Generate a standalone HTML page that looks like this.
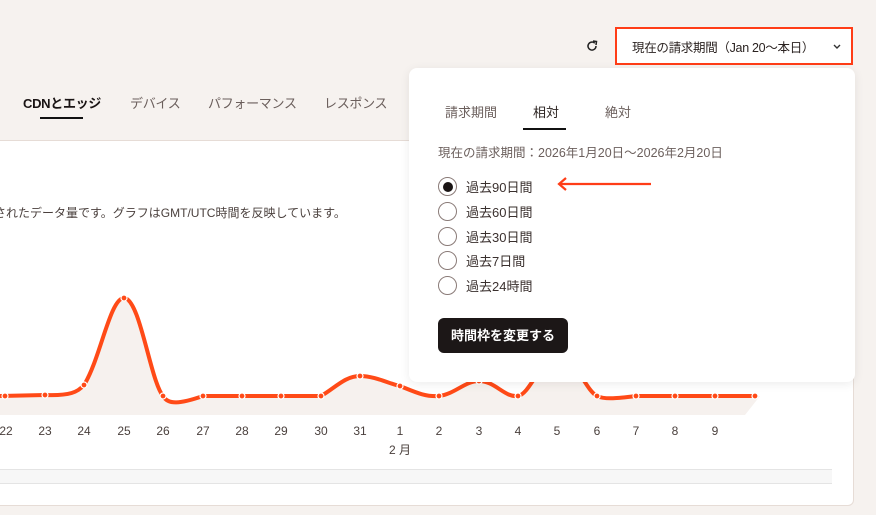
<!DOCTYPE html>
<html><head><meta charset="utf-8"><style>
*{margin:0;padding:0;box-sizing:border-box}
body{width:876px;height:515px;overflow:hidden;background:#f6f2ef;font-family:"Liberation Sans","Noto Sans CJK JP",sans-serif;position:relative;color:#222}
.abs{position:absolute;white-space:nowrap}
.tab{font-size:13px;color:#6b5f5c;top:93px;letter-spacing:-0.3px}
.card{position:absolute;left:-10px;top:140px;width:864px;height:366px;background:#fff;border:1px solid #e6dcd6;border-radius:6px}
.pop{position:absolute;left:409px;top:68px;width:446px;height:314px;background:#fff;border-radius:8px;box-shadow:0 2px 10px rgba(0,0,0,0.08)}
.radio{position:absolute;left:438px;width:19px;height:19px;border:1.3px solid #8a7b78;border-radius:50%}
.rl{font-size:13px;color:#3a302e;left:466px}
.xl{font-size:12px;color:#4a403d;top:424px;transform:translateX(-50%)}
</style></head><body>
<div class="abs tab" style="left:23px;color:#1a1414;font-weight:bold">CDNとエッジ</div>
<div class="abs" style="left:40px;top:117px;width:43px;height:2px;background:#111"></div>
<div class="abs tab" style="left:130px">デバイス</div>
<div class="abs tab" style="left:208px">パフォーマンス</div>
<div class="abs tab" style="left:324px">レスポンス</div>
<div class="card"></div>
<div class="abs" style="left:-6px;top:204px;font-size:12px;color:#4a403d">されたデータ量です。グラフはGMT/UTC時間を反映しています。</div>
<svg class="abs" style="left:0;top:0" width="876" height="515">
<path d="M0,396 L45,395 C70,396 78,392 84,385 C100,360 110,298 124,298 C140,298 150,380 163,396 C168,405 180,404 203,396 L321,396 C335,388 345,376 360,376 C375,376 390,384 400,386 C415,392 425,397 439,396 C455,394 465,381 479,381 C495,381 505,398 518,396 C530,394 540,360 557,355 C575,355 585,390 597,396 C605,400 620,398 636,396 L760,396 L745,415 L0,415Z" fill="#f6f1ee"/>
<path d="M0,396 L45,395 C70,396 78,392 84,385 C100,360 110,298 124,298 C140,298 150,380 163,396 C168,405 180,404 203,396 L321,396 C335,388 345,376 360,376 C375,376 390,384 400,386 C415,392 425,397 439,396 C455,394 465,381 479,381 C495,381 505,398 518,396 C530,394 540,360 557,355 C575,355 585,390 597,396 C605,400 620,398 636,396 L755,396" fill="none" stroke="#ff4a17" stroke-width="4"/>
<g fill="#ff4a17" stroke="#fff" stroke-width="1.2">
<circle cx="5" cy="396" r="3"/><circle cx="45" cy="395" r="3"/><circle cx="84" cy="385" r="3"/><circle cx="124" cy="298" r="3"/><circle cx="163" cy="396" r="3"/><circle cx="203" cy="396" r="3"/><circle cx="242" cy="396" r="3"/><circle cx="281" cy="396" r="3"/><circle cx="321" cy="396" r="3"/><circle cx="360" cy="376" r="3"/><circle cx="400" cy="386" r="3"/><circle cx="439" cy="396" r="3"/><circle cx="479" cy="381" r="3"/><circle cx="518" cy="396" r="3"/><circle cx="597" cy="396" r="3"/><circle cx="636" cy="396" r="3"/><circle cx="675" cy="396" r="3"/><circle cx="715" cy="396" r="3"/><circle cx="755" cy="396" r="3"/>
</g>
<rect x="0" y="469" width="832" height="14" fill="#f7f7f7"/>
<line x1="0" y1="469.5" x2="832" y2="469.5" stroke="#e4e4e4"/>
<line x1="0" y1="483.5" x2="832" y2="483.5" stroke="#e4e4e4"/>
</svg>
<div class="abs xl" style="left:6px">22</div><div class="abs xl" style="left:45px">23</div><div class="abs xl" style="left:84px">24</div><div class="abs xl" style="left:124px">25</div><div class="abs xl" style="left:163px">26</div><div class="abs xl" style="left:203px">27</div><div class="abs xl" style="left:242px">28</div><div class="abs xl" style="left:281px">29</div><div class="abs xl" style="left:321px">30</div><div class="abs xl" style="left:360px">31</div><div class="abs xl" style="left:400px">1</div><div class="abs xl" style="left:439px">2</div><div class="abs xl" style="left:479px">3</div><div class="abs xl" style="left:518px">4</div><div class="abs xl" style="left:557px">5</div><div class="abs xl" style="left:597px">6</div><div class="abs xl" style="left:636px">7</div><div class="abs xl" style="left:675px">8</div><div class="abs xl" style="left:715px">9</div>
<div class="abs xl" style="left:400px;top:441px">2 月</div>

<svg class="abs" style="left:585px;top:39px" width="14" height="14" viewBox="0 0 14 14"><path d="M11,7 A4,4 0 1 1 9.8,4.2" fill="none" stroke="#222" stroke-width="1.5"/><path d="M8,2 L11.5,2.5 L11,6" fill="none" stroke="#222" stroke-width="1.5"/></svg>
<div class="abs" style="left:615px;top:27px;width:238px;height:38px;border:2px solid #ff3d17;background:#fff"></div>
<div class="abs" style="left:632px;top:37px;font-size:12.5px;color:#2a2220;letter-spacing:-0.3px">現在の請求期間（Jan 20〜本日）</div>
<svg class="abs" style="left:832px;top:43px" width="10" height="8"><path d="M2,2 L5,5 L8,2" fill="none" stroke="#333" stroke-width="1.4"/></svg>

<div class="pop"></div>
<div class="abs" style="left:445px;top:102px;font-size:13px;color:#6b5f5c">請求期間</div>
<div class="abs" style="left:533px;top:102px;font-size:13px;color:#2a2220">相対</div>
<div class="abs" style="left:605px;top:102px;font-size:13px;color:#6b5f5c">絶対</div>
<div class="abs" style="left:523px;top:128px;width:43px;height:2px;background:#111"></div>
<div class="abs" style="left:438px;top:142px;font-size:12.5px;color:#6b5f5c">現在の請求期間：2026年1月20日〜2026年2月20日</div>
<div class="radio" style="top:177px"><div style="position:absolute;left:3.5px;top:3.5px;width:10px;height:10px;border-radius:50%;background:#1a1414"></div></div>
<div class="radio" style="top:202px"></div>
<div class="radio" style="top:227px"></div>
<div class="radio" style="top:251px"></div>
<div class="radio" style="top:276px"></div>
<div class="abs rl" style="top:177px">過去90日間</div>
<div class="abs rl" style="top:202px">過去60日間</div>
<div class="abs rl" style="top:227px">過去30日間</div>
<div class="abs rl" style="top:251px">過去7日間</div>
<div class="abs rl" style="top:276px">過去24時間</div>
<svg class="abs" style="left:555px;top:176px" width="100" height="16"><path d="M96,8 L4,8 M11,2 L4,8 L11,14" fill="none" stroke="#ff3d17" stroke-width="2.2"/></svg>
<div class="abs" style="left:438px;top:318px;width:130px;height:35px;background:#1c1717;border-radius:6px;color:#fff;font-size:13px;font-weight:bold;text-align:center;line-height:35px">時間枠を変更する</div>
</body></html>
